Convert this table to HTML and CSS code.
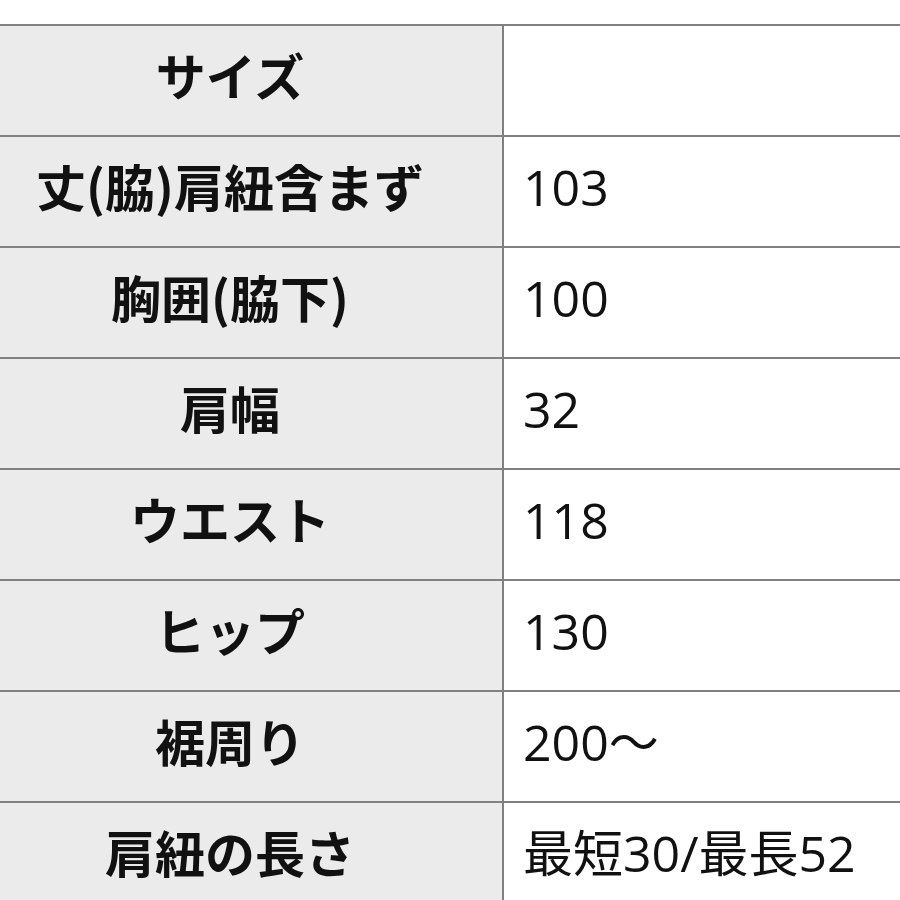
FILE: index.html
```html
<!DOCTYPE html>
<html lang="ja">
<head>
<meta charset="utf-8">
<link rel="stylesheet" href="styles.css">
</head>
<body>
<table class="size-table">
<tr><th>サイズ</th><td></td></tr>
<tr><th>丈(脇)肩紐含まず</th><td>103</td></tr>
<tr><th>胸囲(脇下)</th><td>100</td></tr>
<tr><th>肩幅</th><td>32</td></tr>
<tr><th>ウエスト</th><td>118</td></tr>
<tr><th>ヒップ</th><td>130</td></tr>
<tr><th>裾周り</th><td>200〜</td></tr>
<tr><th>肩紐の長さ</th><td>最短30/最長52</td></tr>
</table>
</body>
</html>
```
FILE: styles.css
```css
html, body {
  margin: 0;
  padding: 0;
  background: #ffffff;
  overflow: hidden;
}
body {
  font-family: "Open Sans", "Noto Sans CJK JP", sans-serif;
  color: #111111;
}
.size-table {
  border-collapse: collapse;
  margin-top: 24px;
  width: 100%;
  table-layout: fixed;
}
.size-table tr {
  height: 111px;
}
.size-table th,
.size-table td {
  border: 2px solid #808080;
  font-size: 50px;
  line-height: 1;
  padding: 0 0 10px 0;
  vertical-align: middle;
}
.size-table th {
  width: 460px;
  border-left: none;
  padding-right: 42px;
  padding-bottom: 14px;
  background: #ebebeb;
  font-family: "Noto Sans CJK JP", sans-serif;
  font-weight: 700;
  text-align: center;
}
.size-table td {
  border-right: none;
  background: #ffffff;
  font-weight: 400;
  text-align: left;
  padding-left: 19px;
}
```
